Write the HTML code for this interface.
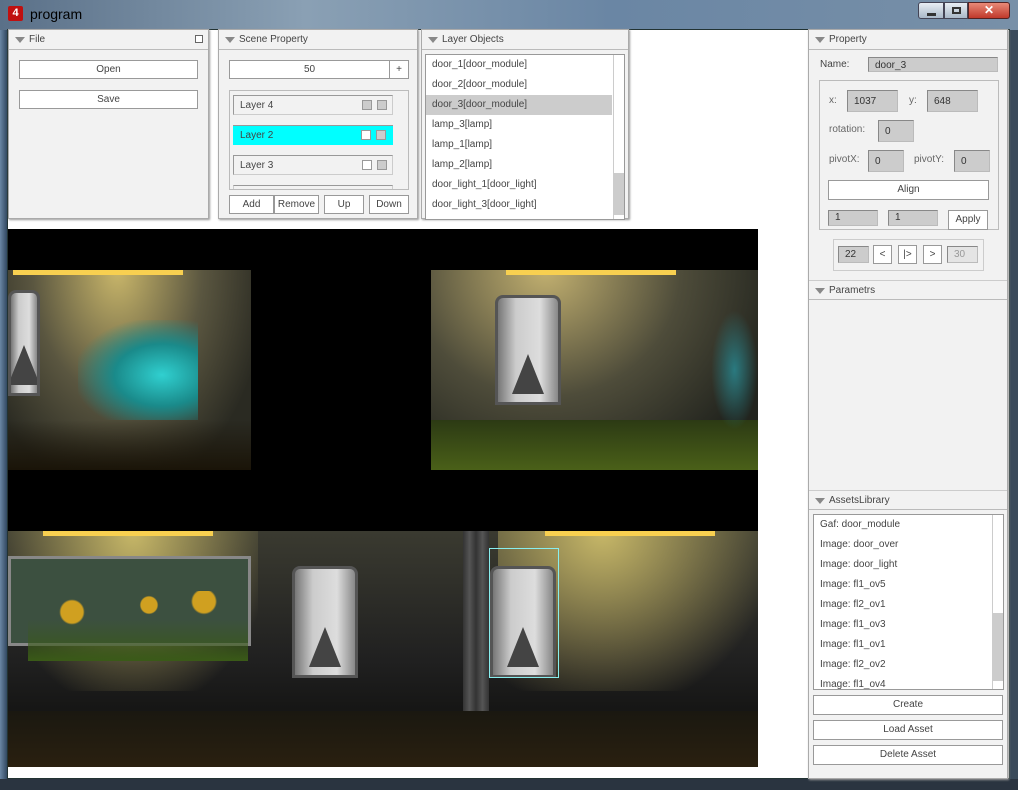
<!DOCTYPE html>
<html><head><meta charset="utf-8"><style>
*{box-sizing:border-box;margin:0;padding:0}
body{width:1018px;height:790px;overflow:hidden;background:#3a4a5a;font-family:"Liberation Sans",sans-serif;font-size:10px;color:#444;position:relative}
.a{position:absolute}
.panel{position:absolute;background:#f2f2f2;border:1px solid #aaa;box-shadow:1px 1px 2px #999}
.hd{position:absolute;left:0;right:0;top:0;height:20px;border-bottom:1px solid #bbb;padding:4px 0 0 20px;color:#444}
.hd:before{content:"";position:absolute;left:6px;top:7px;border-left:5px solid transparent;border-right:5px solid transparent;border-top:6px solid #888}
.btn{position:absolute;background:#fff;border:1px solid #999;text-align:center;color:#444;line-height:17px}
.fld{position:absolute;background:#ccc;border:1px solid #bbb;border-top-color:#888;border-left-color:#888;padding:5px 0 0 6px;font-size:10px;color:#333}
.li{position:absolute;left:0;right:12px;height:20px;padding:4px 0 0 6px;color:#444}
.door{position:absolute;background:linear-gradient(90deg,#777,#ccc 30%,#ddd 70%,#888);border:3px solid #555;border-radius:8px 8px 0 0;overflow:hidden}
.door:after{content:"";position:absolute;left:50%;bottom:8px;margin-left:-16px;border-left:16px solid transparent;border-right:16px solid transparent;border-bottom:40px solid #444}
</style></head><body>
<div class="a" style="left:0;top:0;width:1018px;height:30px;background:linear-gradient(90deg,#5a7088,#8aa0b4 30%,#6a86a4 60%,#7890a8);"></div>
<div class="a" style="left:0;top:30px;width:8px;height:760px;background:linear-gradient(90deg,#6a86a4,#2a4058)"></div>
<div class="a" style="left:8px;top:6px;width:15px;height:15px;background:#c01010;border-radius:2px;color:#fff;font-weight:bold;font-size:11px;text-align:center;line-height:15px">4</div>
<div class="a" style="left:30px;top:6px;font-size:14px;color:#000">program</div>
<div class="a" style="left:918px;top:2px;width:26px;height:17px;background:linear-gradient(#e8eef4,#aab8c8);border:1px solid #445;border-radius:3px 0 0 3px"><div class="a" style="left:8px;top:10px;width:9px;height:3px;background:#333"></div></div>
<div class="a" style="left:944px;top:2px;width:24px;height:17px;background:linear-gradient(#e8eef4,#aab8c8);border:1px solid #445"><div class="a" style="left:7px;top:4px;width:9px;height:7px;border:2px solid #333"></div></div>
<div class="a" style="left:968px;top:2px;width:42px;height:17px;background:linear-gradient(#e88a78,#c0392b);border:1px solid #522;border-radius:0 3px 3px 0;color:#fff;font-weight:bold;text-align:center;font-size:12px;line-height:15px">✕</div>
<div class="a" style="left:7px;top:29px;width:1003px;height:750px;background:#fff;border:1px solid #233"></div>
<div class="a" style="left:0;top:779px;width:1018px;height:11px;background:#2a3440"></div>

<div class="panel" style="left:8px;top:29px;width:201px;height:190px">
<div class="hd">File</div>
<div class="a" style="left:186px;top:5px;width:8px;height:8px;border:1px solid #666;background:#fff"></div>
<div class="btn" style="left:10px;top:30px;width:179px;height:19px">Open</div>
<div class="btn" style="left:10px;top:60px;width:179px;height:19px">Save</div>
</div>
<div class="panel" style="left:218px;top:29px;width:200px;height:190px">
<div class="hd">Scene Property</div>
<div class="btn" style="left:10px;top:30px;width:161px;height:19px">50</div>
<div class="btn" style="left:170px;top:30px;width:20px;height:19px">+</div>
<div class="a" style="left:10px;top:60px;width:180px;height:100px;border:1px solid #bbb;overflow:hidden">
 <div class="a" style="left:3px;top:4px;width:160px;height:20px;border:1px solid #ccc;border-top-color:#999;border-left-color:#999;padding:4px 0 0 6px">Layer 4<div class="a" style="left:128px;top:4px;width:10px;height:10px;background:#ccc;border:1px solid #999"></div><div class="a" style="left:143px;top:4px;width:10px;height:10px;background:#ccc;border:1px solid #999"></div></div>
 <div class="a" style="left:3px;top:34px;width:160px;height:20px;background:#00ffff;border-top:1px solid #999;padding:4px 0 0 7px">Layer 2<div class="a" style="left:128px;top:4px;width:10px;height:10px;background:#fff;border:1px solid #999"></div><div class="a" style="left:143px;top:4px;width:10px;height:10px;background:#ccc;border:1px solid #999"></div></div>
 <div class="a" style="left:3px;top:64px;width:160px;height:20px;border:1px solid #ccc;border-top-color:#999;border-left-color:#999;padding:4px 0 0 6px">Layer 3<div class="a" style="left:128px;top:4px;width:10px;height:10px;background:#fff;border:1px solid #999"></div><div class="a" style="left:143px;top:4px;width:10px;height:10px;background:#ccc;border:1px solid #999"></div></div>
 <div class="a" style="left:3px;top:94px;width:160px;height:20px;border:1px solid #ccc;border-top-color:#999"></div>
</div>
<div class="btn" style="left:10px;top:165px;width:45px;height:19px">Add</div>
<div class="btn" style="left:55px;top:165px;width:45px;height:19px">Remove</div>
<div class="btn" style="left:105px;top:165px;width:40px;height:19px">Up</div>
<div class="btn" style="left:150px;top:165px;width:40px;height:19px">Down</div>
</div>
<div class="panel" style="left:421px;top:29px;width:208px;height:190px">
<div class="hd">Layer Objects</div>
<div class="a" style="left:3px;top:24px;width:200px;height:166px;background:#fff;border:1px solid #999;overflow:hidden">
<div class="li" style="top:0">door_1[door_module]</div>
<div class="li" style="top:20px">door_2[door_module]</div>
<div class="li" style="top:40px;background:#ccc">door_3[door_module]</div>
<div class="li" style="top:60px">lamp_3[lamp]</div>
<div class="li" style="top:80px">lamp_1[lamp]</div>
<div class="li" style="top:100px">lamp_2[lamp]</div>
<div class="li" style="top:120px">door_light_1[door_light]</div>
<div class="li" style="top:140px">door_light_3[door_light]</div>
<div class="a" style="right:0;top:0;width:11px;height:166px;background:#fff;border-left:1px solid #ccc"><div class="a" style="left:0;top:118px;width:10px;height:42px;background:#ccc"></div></div>
</div>
</div>

<div class="a" style="left:8px;top:229px;width:750px;height:538px;background:#000;overflow:hidden">
 <div class="a" style="left:0;top:41px;width:243px;height:200px;background:radial-gradient(ellipse at 45% 0%,#c9b66a,#5a5640 45%,#2a2a22 80%)">
  <div class="a" style="left:5px;top:0;width:170px;height:5px;background:#f8d050"></div>
  <div class="a" style="left:70px;top:50px;width:120px;height:100px;background:radial-gradient(ellipse at 70% 55%,#30d0d0,#1a8a8a 40%,transparent 75%)"></div>
  <div class="door" style="left:0;top:20px;width:32px;height:106px"></div>
  <div class="a" style="left:0;top:150px;width:243px;height:50px;background:linear-gradient(transparent,#1a1408)"></div>
 </div>
 <div class="a" style="left:423px;top:41px;width:327px;height:200px;background:radial-gradient(ellipse at 35% 0%,#c2b070,#4e4c3a 45%,#22241e 80%)">
  <div class="a" style="left:75px;top:0;width:170px;height:5px;background:#f8d050"></div>
  <div class="door" style="left:64px;top:25px;width:66px;height:110px"></div>
  <div class="a" style="left:0;top:150px;width:327px;height:50px;background:linear-gradient(#2c3a14,#4a6018)"></div>
  <div class="a" style="left:280px;top:40px;width:47px;height:120px;background:radial-gradient(#2a7a80,transparent 70%)"></div>
 </div>
 <div class="a" style="left:0;top:302px;width:750px;height:236px;background:linear-gradient(#3a3a30,#202020 55%,#0a0a08)">
  <div class="a" style="left:0;top:0;width:250px;height:160px;background:radial-gradient(ellipse at 50% 0%,#c8b868,transparent 80%)"></div>
  <div class="a" style="left:490px;top:0;width:260px;height:160px;background:radial-gradient(ellipse at 40% 0%,#c8b868,transparent 80%)"></div>
  <div class="a" style="left:35px;top:0;width:170px;height:5px;background:#f8d050"></div>
  <div class="a" style="left:537px;top:0;width:170px;height:5px;background:#f8d050"></div>
  <div class="a" style="left:0;top:25px;width:243px;height:90px;background:#3c5040;border:3px solid #888"></div>
  <div class="a" style="left:20px;top:60px;width:220px;height:70px;background:radial-gradient(circle at 20% 30%,#d0a020 6%,transparent 7%),radial-gradient(circle at 55% 20%,#d0a020 6%,transparent 7%),radial-gradient(circle at 80% 15%,#d0a020 6%,transparent 7%),linear-gradient(transparent 40%,#3a5a18)"></div>
  <div class="door" style="left:284px;top:35px;width:66px;height:112px"></div>
  <div class="a" style="left:455px;top:0;width:26px;height:180px;background:linear-gradient(90deg,#333,#555,#333,#555,#333)"></div>
  <div class="door" style="left:482px;top:35px;width:66px;height:112px"></div>
  <div class="a" style="left:481px;top:17px;width:70px;height:130px;border:1px solid #8ee"></div>
  <div class="a" style="left:0;top:180px;width:750px;height:56px;background:linear-gradient(#1a1810,#2a2010)"></div>
 </div>
</div>

<div class="panel" style="left:808px;top:29px;width:200px;height:750px">
<div class="hd">Property</div>
<div class="a" style="left:11px;top:29px">Name:</div>
<div class="fld" style="left:59px;top:27px;width:130px;height:15px;padding-top:2px">door_3</div>
<div class="a" style="left:10px;top:50px;width:180px;height:150px;border:1px solid #bbb"></div>
<div class="a" style="left:20px;top:65px;color:#666">x:</div>
<div class="fld" style="left:38px;top:60px;width:51px;height:22px">1037</div>
<div class="a" style="left:100px;top:65px;color:#666">y:</div>
<div class="fld" style="left:118px;top:60px;width:51px;height:22px">648</div>
<div class="a" style="left:20px;top:94px;color:#666">rotation:</div>
<div class="fld" style="left:69px;top:90px;width:36px;height:22px">0</div>
<div class="a" style="left:20px;top:124px;color:#666">pivotX:</div>
<div class="fld" style="left:59px;top:120px;width:36px;height:22px">0</div>
<div class="a" style="left:105px;top:124px;color:#666">pivotY:</div>
<div class="fld" style="left:145px;top:120px;width:36px;height:22px">0</div>
<div class="btn" style="left:19px;top:150px;width:161px;height:20px">Align</div>
<div class="fld" style="left:19px;top:180px;width:50px;height:16px;padding-top:1px">1</div>
<div class="fld" style="left:79px;top:180px;width:50px;height:16px;padding-top:1px">1</div>
<div class="btn" style="left:139px;top:180px;width:40px;height:20px">Apply</div>
<div class="a" style="left:24px;top:209px;width:151px;height:32px;border:1px solid #ccc"></div>
<div class="fld" style="left:29px;top:216px;width:31px;height:17px;padding-top:2px">22</div>
<div class="btn" style="left:64px;top:215px;width:19px;height:19px">&lt;</div>
<div class="btn" style="left:89px;top:215px;width:19px;height:19px">|&gt;</div>
<div class="btn" style="left:114px;top:215px;width:19px;height:19px">&gt;</div>
<div class="fld" style="left:138px;top:216px;width:31px;height:17px;padding-top:2px;background:#e4e4e4;color:#999">30</div>
<div class="hd" style="top:250px;border-top:1px solid #ccc">Parametrs</div>
<div class="hd" style="top:460px;border-top:1px solid #ccc">AssetsLibrary</div>
<div class="a" style="left:4px;top:484px;width:191px;height:176px;background:#fff;border:1px solid #999;overflow:hidden">
<div class="li" style="top:0">Gaf: door_module</div>
<div class="li" style="top:20px">Image: door_over</div>
<div class="li" style="top:40px">Image: door_light</div>
<div class="li" style="top:60px">Image: fl1_ov5</div>
<div class="li" style="top:80px">Image: fl2_ov1</div>
<div class="li" style="top:100px">Image: fl1_ov3</div>
<div class="li" style="top:120px">Image: fl1_ov1</div>
<div class="li" style="top:140px">Image: fl2_ov2</div>
<div class="li" style="top:160px">Image: fl1_ov4</div>
<div class="a" style="right:0;top:0;width:11px;height:176px;background:#fff;border-left:1px solid #ccc"><div class="a" style="left:0;top:98px;width:10px;height:68px;background:#ccc"></div></div>
</div>
<div class="btn" style="left:4px;top:665px;width:190px;height:20px">Create</div>
<div class="btn" style="left:4px;top:690px;width:190px;height:20px">Load Asset</div>
<div class="btn" style="left:4px;top:715px;width:190px;height:20px">Delete Asset</div>
</div>
</body></html>
